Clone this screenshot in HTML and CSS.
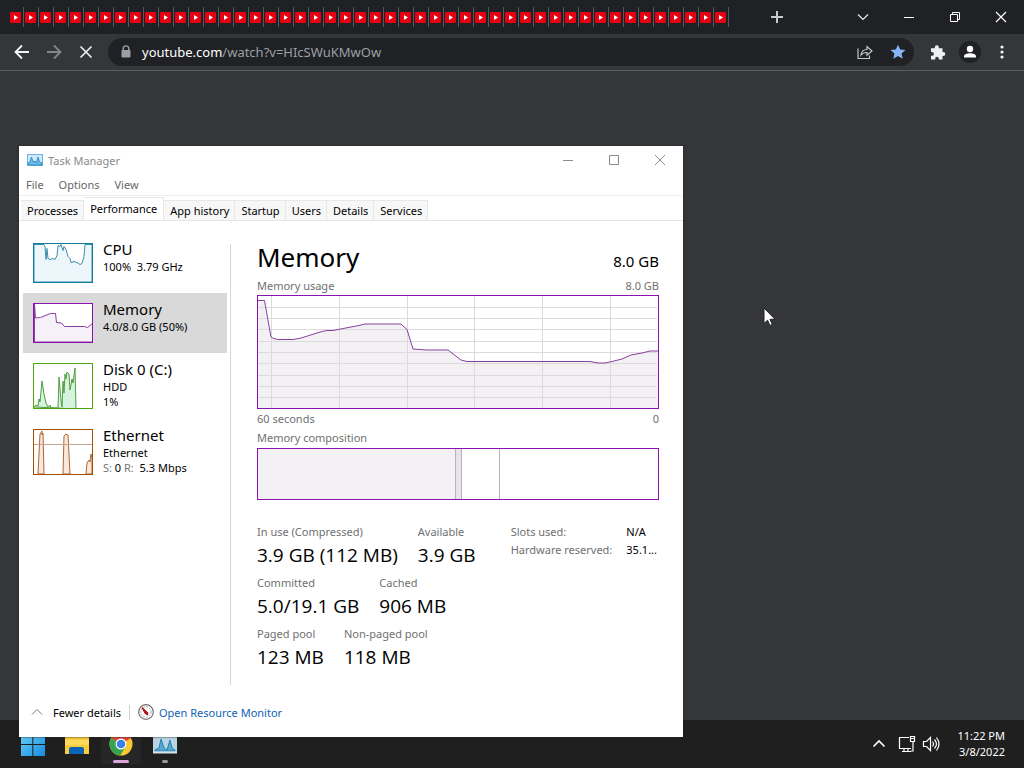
FILE: index.html
```
<!DOCTYPE html>
<html lang="en">
<head>
<meta charset="UTF-8">
<meta name="viewport" content="width=device-width, initial-scale=1.0">
<title>Desktop</title>
<link rel="stylesheet" href="styles.css">
</head>
<body>
<div class="browser">
  <div class="tabstrip">
    <div class="browser-tabs" id="browserTabs"></div>
    <button class="icon-btn new-tab" aria-label="New tab"><svg width="14" height="14" viewBox="0 0 14 14"><path d="M7 1v12M1 7h12" stroke="#c8c9cb" stroke-width="2"/></svg></button>
    <div class="window-buttons">
      <button class="icon-btn" aria-label="Search tabs"><svg width="12" height="12" viewBox="0 0 12 12"><path d="M1 3.500l5 5 5-5" fill="none" stroke="#e8eaed" stroke-width="1.200"/></svg></button>
      <button class="icon-btn" aria-label="Minimize"><svg width="12" height="12" viewBox="0 0 12 12"><path d="M1 6.500h10" stroke="#fff"/></svg></button>
      <button class="icon-btn" aria-label="Restore"><svg width="12" height="12" viewBox="0 0 12 12"><path d="M1.500 3.500h7v7h-7zM3.500 3.500v-2h7v7h-2" fill="none" stroke="#fff"/></svg></button>
      <button class="icon-btn" aria-label="Close"><svg width="12" height="12" viewBox="0 0 12 12"><path d="M1 1l10 10M11 1L1 11" stroke="#fff" stroke-width="1.200"/></svg></button>
    </div>
  </div>
  <div class="toolbar">
    <button class="icon-btn" aria-label="Back"><svg width="16" height="16" viewBox="0 0 16 16"><path d="M15 8H2M8 1.500L1.500 8 8 14.500" fill="none" stroke="#f1f3f4" stroke-width="1.800"/></svg></button>
    <button class="icon-btn" aria-label="Forward"><svg width="16" height="16" viewBox="0 0 16 16"><path d="M1 8h13M8 1.500L14.500 8 8 14.500" fill="none" stroke="#85878a" stroke-width="1.800"/></svg></button>
    <button class="icon-btn" aria-label="Stop"><svg width="16" height="16" viewBox="0 0 16 16"><path d="M2.500 2.500l11 11M13.500 2.500l-11 11" stroke="#f1f3f4" stroke-width="1.600"/></svg></button>
    <div class="address">
      <svg width="10" height="14" viewBox="0 0 10 14"><path d="M2.200 6V3.700a2.800 2.800 0 0 1 5.600 0V6" fill="none" stroke="#9aa0a6" stroke-width="1.400"/><rect x="0.500" y="5" width="9" height="7.500" rx="1" fill="#9aa0a6"/></svg>
      <span class="url"><b>youtube.com</b>/watch?v=HIcSWuKMwOw</span>
      <button class="icon-btn" aria-label="Share"><svg width="18" height="16" viewBox="0 0 18 16"><path d="M2 4.500v10h11.500v-3M5 11c.5-4 2.500-5.500 6-5.500v-3L16 7l-5 4.200V8.500C8 8.500 6.500 9 5 11z" fill="none" stroke="#c4c6c9" stroke-width="1.200"/></svg></button>
      <button class="icon-btn" aria-label="Bookmark"><svg width="16" height="16" viewBox="0 0 16 16"><path d="M8 .7l2.200 4.900 5.300.5-4 3.500 1.200 5.200L8 12.100l-4.700 2.700 1.200-5.200-4-3.500 5.300-.5z" fill="#8ab4f8"/></svg></button>
    </div>
    <div class="extras">
      <button class="icon-btn" aria-label="Extensions"><svg width="16" height="16" viewBox="0 0 16 16"><path d="M1 4.200h3.800v-1a2 2 0 0 1 4 0v1h3.700V8h.8a2 2 0 0 1 0 4h-.8v3.500H8.800v-1a1.800 1.800 0 0 0-3.600 0v1H1v-3.700h1a1.900 1.900 0 0 0 0-3.800H1z" fill="#eef0f2"/></svg></button>
      <button class="icon-btn" aria-label="Profile"><svg width="22" height="22" viewBox="0 0 22 22"><circle cx="11" cy="11" r="11" fill="#202124"/><circle cx="11" cy="8" r="3.200" fill="#fff"/><path d="M5 16.500v-1.300c0-4 12-4 12 0v1.300z" fill="#fff"/></svg></button>
      <button class="icon-btn" aria-label="Menu"><svg width="16" height="16" viewBox="0 0 16 16"><g fill="#f1f3f4"><circle cx="8" cy="3" r="1.600"/><circle cx="8" cy="8" r="1.600"/><circle cx="8" cy="13" r="1.600"/></g></svg></button>
    </div>
  </div>
  <div class="page"></div>
</div>

<footer class="taskbar">
  <div class="apps">
    <button class="app" aria-label="Start"><svg width="24" height="24" viewBox="0 0 24 24"><defs><linearGradient id="win" x2="1" y2="1"><stop stop-color="#6cd0f7"/><stop offset="1" stop-color="#158be0"/></linearGradient></defs><path d="M0 1h11.300v11H0zM12.300 1H24v11H12.300zM0 13h11.300v11H0zM12.300 13H24v11H12.300z" fill="url(#win)"/></svg></button>
    <button class="app" aria-label="File Explorer"><svg width="24" height="24" viewBox="0 0 24 24"><path d="M0 2h9l2 3h13v17H0z" fill="#f8cc3d"/><path d="M0 8h24v5H0z" fill="#ffd95a"/><path d="M4 22v-5a2 2 0 0 1 2-2h11a2 2 0 0 1 2 2v5z" fill="#0b63b8"/></svg></button>
    <button class="app app-active" aria-label="Chrome"><svg width="24" height="24" viewBox="0 0 24 24"><circle cx="12" cy="12" r="11.500" fill="#fbc92e"/><path d="M12 12L2 6.200a11.500 11.500 0 0 1 20 0z" fill="#df4a3c"/><path d="M2 6.200A11.500 11.500 0 0 0 11 23.500L16.500 15 12 12z" fill="#35a251"/><circle cx="12" cy="12" r="5.500" fill="#fff"/><circle cx="12" cy="12" r="4.300" fill="#3b7fe8"/></svg></button>
    <button class="app app-open" aria-label="Task Manager"><svg width="24" height="24" viewBox="0 0 24 24"><rect y="1" width="24" height="20" fill="#b9d4e4"/><path d="M2 18l4-2 2-9 3 9 3 2 3-10 2 8 3 2v1H2z" fill="#55a9d2" stroke="#277fac"/><path d="M0 20.500h24" stroke="#d8e3e8" stroke-width="2"/></svg></button>
  </div>
  <div class="tray">
    <svg width="14" height="14" viewBox="0 0 14 14"><path d="M1.500 9.500L7 4l5.500 5.500" fill="none" stroke="#fff" stroke-width="1.600"/></svg>
    <div class="status">
      <svg width="18" height="18" viewBox="0 0 18 18"><path d="M11 2.500H1.500v11H13M4 16.500h9M6 13.500v3M10 13.500v3M15 7v9h-2M12.500 1.500h4v5h-4zM12.500 3.500h4" fill="none" stroke="#fff" stroke-width="1.200"/></svg>
      <svg width="18" height="18" viewBox="0 0 18 18"><path d="M1.500 6.500h3l4-4v13l-4-4h-3z" fill="none" stroke="#fff" stroke-width="1.200"/><path d="M10.500 6.500q2 2.500 0 5M12.500 4.500q4 4.500 0 9M14.500 2.500q5 6.500 0 13" fill="none" stroke="#fff" stroke-width="1.200"/></svg>
    </div>
    <div class="clock">11:22 PM<br>3/8/2022</div>
  </div>
</footer>

<section class="task-manager">
  <header class="titlebar">
    <svg width="16" height="12" viewBox="0 0 16 12"><rect x="0.500" y="0.500" width="15" height="11" fill="#cde8fa" stroke="#6fb4e0"/><path d="M1 9l2-1 1.500-5L6 8l2-1 1.500 2L11 3l1.500 5 2.500 1v2H1z" fill="#6fbce9" stroke="#2181c0" stroke-width=".8"/></svg>
    <span>Task Manager</span>
    <div class="tm-buttons">
      <button class="icon-btn" aria-label="Minimize"><svg width="12" height="12" viewBox="0 0 12 12"><path d="M1 6.500h10" stroke="#8a8a8a"/></svg></button>
      <button class="icon-btn" aria-label="Maximize"><svg width="12" height="12" viewBox="0 0 12 12"><path d="M1.500 1.500h9v9h-9z" fill="none" stroke="#8a8a8a"/></svg></button>
      <button class="icon-btn" aria-label="Close"><svg width="12" height="12" viewBox="0 0 12 12"><path d="M1 1l10 10M11 1L1 11" stroke="#8a8a8a"/></svg></button>
    </div>
  </header>
  <nav class="menu">
    <button>File</button>
    <button>Options</button>
    <button>View</button>
  </nav>
  <div class="tabs">
    <button>Processes</button>
    <button class="selected">Performance</button>
    <button>App history</button>
    <button>Startup</button>
    <button>Users</button>
    <button>Details</button>
    <button>Services</button>
  </div>

  <div class="content">
    <div class="devices">
      <div class="device">
        <svg class="thumb" width="60" height="40" viewBox="0 0 60 40"><path d="M1 1.500h10l1 2 1 13 1-11 1 10 2 1 3-1 2 1 2-4 1-10 2 1 1-2 2 6 1-4 2 3 2 7 2 2 1 4 3-1 3 1 3 2 2-1 2-7 1-12 7 0V39H1z" fill="#edf6fb" stroke="#3a8fa8"/><rect x="0.500" y="0.500" width="59" height="39" fill="none" stroke="#117da0"/></svg>
        <div><h2>CPU</h2><p>100%&nbsp; 3.79 GHz</p></div>
      </div>
      <div class="device active">
        <svg class="thumb" width="60" height="40" viewBox="0 0 60 40"><rect width="60" height="40" fill="#fff"/><path d="M1.500 1l1 14 5-.5 10-4h5l1 9 5 .5 3 3.500h20l3 1 5-4V39h-58z" fill="#f6f0f8" stroke="#8740a0"/><rect x="0.500" y="0.500" width="59" height="39" fill="none" stroke="#8b12ae"/></svg>
        <div><h2>Memory</h2><p>4.0/8.0 GB (50%)</p></div>
      </div>
      <div class="device">
        <svg class="thumb" width="60" height="46" viewBox="0 0 60 46"><path d="M1 44l2-2 2 1 1-7 1 3 2-21 2 13 2 9 2 4 2-2 1 3h7l1-31 2 23 1 7 1-26 1 12 1-19 1 5 1-7 2 2 1 16 2-11 1 4 2-15 1 41 1 0z" fill="#d5f3df" stroke="#519d42"/><rect x="0.500" y="0.500" width="59" height="45" fill="none" stroke="#4da60c"/></svg>
        <div><h2>Disk 0 (C:)</h2><p>HDD</p><p>1%</p></div>
      </div>
      <div class="device">
        <svg class="thumb" width="60" height="46" viewBox="0 0 60 46"><path d="M5 45L7 5l2-3v4l1-2 1 41zM30 45l1-38 2-2 2 1 2 39zM53 45l1-11 2-3 1 2 1-8 1 4v16z" fill="#fce8da" stroke="#a7683a"/><path d="M1 15.500h58" stroke="#c7a58d"/><rect x="0.500" y="0.500" width="59" height="45" fill="none" stroke="#a74f01"/></svg>
        <div><h2>Ethernet</h2><p>Ethernet</p><p><span class="dim">S:</span> 0 <span class="dim">R:</span>&nbsp; 5.3 Mbps</p></div>
      </div>
    </div>

    <div class="details">
      <div class="heading"><h1>Memory</h1><span>8.0 GB</span></div>
      <div class="caption"><span>Memory usage</span><span>8.0 GB</span></div>
      <svg class="chart" viewBox="0 0 402 114">
        <path d="M1 5.500h6.500L14 42l1.500 1 5 1.500H36l8-1.500 21-6.500 5-1h6l10-2 16-3 6-1.500h36l6 5.500 6 19.500 14 1h21l13 10 6 1.500h123l8 1.500h7l7-1.500 10-2.500 9-4 11-2 8-2h8V113H1z" fill="#f4f1f5"/>
        <path d="M14.500 1v112M82.500 1v112M150.500 1v112M217.500 1v112M285.500 1v112M353.500 1v112M1 12.500h399M1 23.500h399M1 34.500h399M1 46.500h399M1 57.500h399M1 68.500h399M1 80.500h399M1 91.500h399M1 102.500h399" stroke="#dddade"/>
        <path d="M1 5.500h6.500L14 42l1.500 1 5 1.500H36l8-1.500 21-6.500 5-1h6l10-2 16-3 6-1.500h36l6 5.500 6 19.500 14 1h21l13 10 6 1.500h123l8 1.500h7l7-1.500 10-2.500 9-4 11-2 8-2h8" fill="none" stroke="#8740a0"/>
        <rect x="0.500" y="0.500" width="401" height="113" fill="none" stroke="#8b12ae"/>
      </svg>
      <div class="caption"><span>60 seconds</span><span>0</span></div>
      <div class="caption"><span>Memory composition</span></div>
      <div class="composition">
        <div class="in-use"></div>
        <div class="modified"></div>
        <div class="standby"></div>
        <div class="free"></div>
      </div>
      <div class="stats">
        <div class="stat-rows">
          <div class="stat-row">
            <dl><dt>In use (Compressed)</dt><dd>3.9 GB (112 MB)</dd></dl>
            <dl><dt>Available</dt><dd>3.9 GB</dd></dl>
          </div>
          <div class="stat-row">
            <dl><dt>Committed</dt><dd>5.0/19.1 GB</dd></dl>
            <dl><dt>Cached</dt><dd>906 MB</dd></dl>
          </div>
          <div class="stat-row">
            <dl><dt>Paged pool</dt><dd>123 MB</dd></dl>
            <dl><dt>Non-paged pool</dt><dd>118 MB</dd></dl>
          </div>
        </div>
        <dl class="hardware">
          <dt>Slots used:</dt><dd>N/A</dd>
          <dt>Hardware reserved:</dt><dd>35.1...</dd>
        </dl>
      </div>
    </div>
  </div>

  <div class="tm-footer">
    <button class="fewer"><svg width="12" height="12" viewBox="0 0 12 12"><path d="M1 8.500l5-5 5 5" fill="none" stroke="#777"/></svg>Fewer details</button>
    <a href="#"><svg width="16" height="16" viewBox="0 0 16 16"><circle cx="8" cy="8" r="7.300" fill="#fff" stroke="#74706e" stroke-width="1.200"/><circle cx="8" cy="8" r="5.200" fill="none" stroke="#aaa" stroke-dasharray="2 1"/><path d="M4 3.500l3 6 2.500 1.500.5-2z" fill="#c4161c" stroke="#a01015"/></svg>Open Resource Monitor</a>
  </div>
</section>

<svg class="cursor" width="13" height="20" viewBox="0 0 13 20"><path d="M1 1v15.500l3.600-3.300 2.300 5.300 2.400-1-2.300-5.200H12z" fill="#fff" stroke="#222"/></svg>

<script src="script.js"></script>
</body>
</html>
```

FILE: styles.css
```
* {
  box-sizing: border-box;
}
body {
  margin: 0;
  height: 100vh;
  display: flex;
  flex-direction: column;
  position: relative;
  overflow: hidden;
  background-color: #35363a;
  font-family: "Noto Sans", "Open Sans", sans-serif;
  font-size: 11px;
  color: #000;
}
h1, h2, p, dl, dt, dd {
  margin: 0;
  font-weight: normal;
}
button {
  font: inherit;
  color: inherit;
  background: none;
  border: none;
  padding: 0;
}
svg {
  display: block;
  flex-shrink: 0;
}
.icon-btn {
  display: flex;
  align-items: center;
  justify-content: center;
}

/* browser */
.browser {
  flex: 1;
  display: flex;
  flex-direction: column;
}
.tabstrip {
  height: 34px;
  display: flex;
  align-items: center;
  padding-left: 9px;
  background-color: #202124;
}
.browser-tabs {
  display: flex;
}
.browser-tab {
  width: 15px;
  height: 20px;
  border-right: 1px solid #56585b;
  display: flex;
  align-items: center;
  padding-left: 1px;
}
.new-tab {
  margin-left: 41px;
}
.window-buttons {
  display: flex;
  margin-left: auto;
  height: 28px;
}
.window-buttons .icon-btn {
  width: 46px;
}
.toolbar {
  height: 37px;
  display: flex;
  align-items: center;
  gap: 16px;
  padding: 0 14px;
  border-bottom: 1px solid #5c5e61;
}
.address {
  flex: 1;
  height: 28px;
  display: flex;
  align-items: center;
  gap: 16px;
  margin-left: -2px;
  padding: 0 8px 0 13px;
  border-radius: 14px;
  background-color: #202124;
}
.url {
  flex: 1;
  margin-left: -5px;
  font-size: 13px;
  color: #9aa0a6;
}
.url b {
  font-weight: normal;
  color: #fff;
}
.extras {
  display: flex;
  align-items: center;
  gap: 13px;
}

/* taskbar */
.taskbar {
  height: 48px;
  display: flex;
  justify-content: space-between;
  background-color: #1f1f1f;
  color: #fff;
}
.apps {
  display: flex;
  gap: 4px;
  padding: 4px 13px;
}
.app {
  width: 40px;
  height: 40px;
  display: flex;
  align-items: center;
  justify-content: center;
  position: relative;
  border-radius: 4px;
}
.app-active {
  background-color: #262626;
}
.app-active::after, .app-open::after {
  content: "";
  position: absolute;
  bottom: 1px;
  width: 16px;
  height: 3px;
  border-radius: 2px;
  background-color: #d9a5dc;
}
.app-open::after {
  width: 6px;
  background-color: #9a9a9a;
}
.tray {
  display: flex;
  align-items: center;
  gap: 12px;
  padding-right: 19px;
}
.status {
  display: flex;
  gap: 6px;
}
.clock {
  margin-left: 5px;
  line-height: 16px;
  text-align: right;
}

/* task manager window */
.task-manager {
  position: absolute;
  left: 19px;
  top: 146px;
  width: 664px;
  background-color: #fff;
  box-shadow: 0 0 2px #222;
}
.titlebar {
  height: 28px;
  display: flex;
  align-items: center;
  gap: 5px;
  padding-left: 8px;
  color: #8a8a8a;
}
.tm-buttons {
  display: flex;
  margin-left: auto;
}
.tm-buttons .icon-btn {
  width: 46px;
}
.menu {
  height: 22px;
  display: flex;
  align-items: center;
  gap: 15px;
  padding-left: 7px;
  border-bottom: 1px solid #eee;
  color: #666;
}
.tabs {
  height: 25px;
  display: flex;
  align-items: flex-end;
  padding-left: 2px;
  border-bottom: 1px solid #e5e5e5;
}
.tabs button {
  height: 20px;
  padding: 0 5px 0 6px;
  border: 1px solid #e8e8e8;
  border-left: none;
  border-bottom: none;
  background-color: #f7f7f7;
}
.tabs .selected {
  height: 23px;
  padding: 0 6px 2px;
  background-color: #fff;
}
.content {
  display: flex;
  padding: 12px 24px 0 4px;
}
.devices {
  width: 204px;
}
.device {
  display: flex;
  gap: 10px;
  padding: 7px 10px 10px;
}
.active {
  background-color: #d9d9d9;
}
.thumb {
  margin-top: 3px;
}
.device h2 {
  font-size: 15px;
  line-height: 19px;
}
.device div {
  margin-bottom: -10px;
}
.device p {
  line-height: 15px;
}
.dim {
  color: #777;
}
.details {
  flex: 1;
  margin: 11px 0 0 3px;
  padding-left: 26px;
  height: 441px;
  border-left: 1px solid #d5d5d5;
}
.heading {
  height: 32px;
  display: flex;
  justify-content: space-between;
  align-items: baseline;
  line-height: 26px;
  font-size: 15px;
}
.heading h1 {
  font-size: 26px;
}
.caption {
  display: flex;
  justify-content: space-between;
  line-height: 19px;
  color: #707070;
}
.chart {
  width: 100%;
}
.composition {
  display: flex;
  height: 52px;
  margin-top: 1px;
  border: 1px solid #8b12ae;
}
.composition div {
  border-right: 1px solid #bcb0c0;
}
.composition .in-use {
  flex: 198;
  background-color: #f4f1f5;
}
.composition .modified {
  flex: 6;
  background-color: #e9e2ec;
}
.composition .standby {
  flex: 37;
}
.composition .free {
  flex: 159;
  border-right: none;
}
.stats {
  display: flex;
  justify-content: space-between;
  margin-top: 23px;
}
.stat-rows {
  display: flex;
  flex-direction: column;
  gap: 5px;
}
.stat-row {
  display: flex;
  gap: 20px;
}
dt {
  line-height: 18px;
  color: #707070;
}
.stat-row dd {
  font-family: "Open Sans", "Noto Sans", sans-serif;
  font-size: 19px;
  line-height: 28px;
}
.hardware {
  display: grid;
  grid-template-columns: auto auto;
  align-content: start;
  column-gap: 14px;
  padding-right: 2px;
}
.hardware dd {
  line-height: 18px;
}
.tm-footer {
  height: 52px;
  display: flex;
  align-items: center;
  gap: 8px;
  padding: 2px 12px 0;
}
.tm-footer a, .fewer {
  display: flex;
  align-items: center;
  gap: 5px;
}
.fewer {
  gap: 10px;
  padding-right: 8px;
  border-right: 1px solid #d0d0d0;
}
.tm-footer a {
  color: #0f5fb5;
  text-decoration: none;
}
.cursor {
  position: absolute;
  left: 763px;
  top: 307px;
}
```

FILE: script.js
```
var strip = document.getElementById("browserTabs");
var icon = '<svg width="11" height="11" viewBox="0 0 11 11"><rect width="11" height="11" rx="1" fill="#e60012"/><path d="M4 3l4 2.500L4 8z" fill="#fff"/></svg>';

for (var i = 0; i < 48; i++) {
  var tab = document.createElement("button");
  tab.className = "browser-tab";
  tab.setAttribute("aria-label", "YouTube");
  tab.innerHTML = icon;
  strip.appendChild(tab);
}
```
